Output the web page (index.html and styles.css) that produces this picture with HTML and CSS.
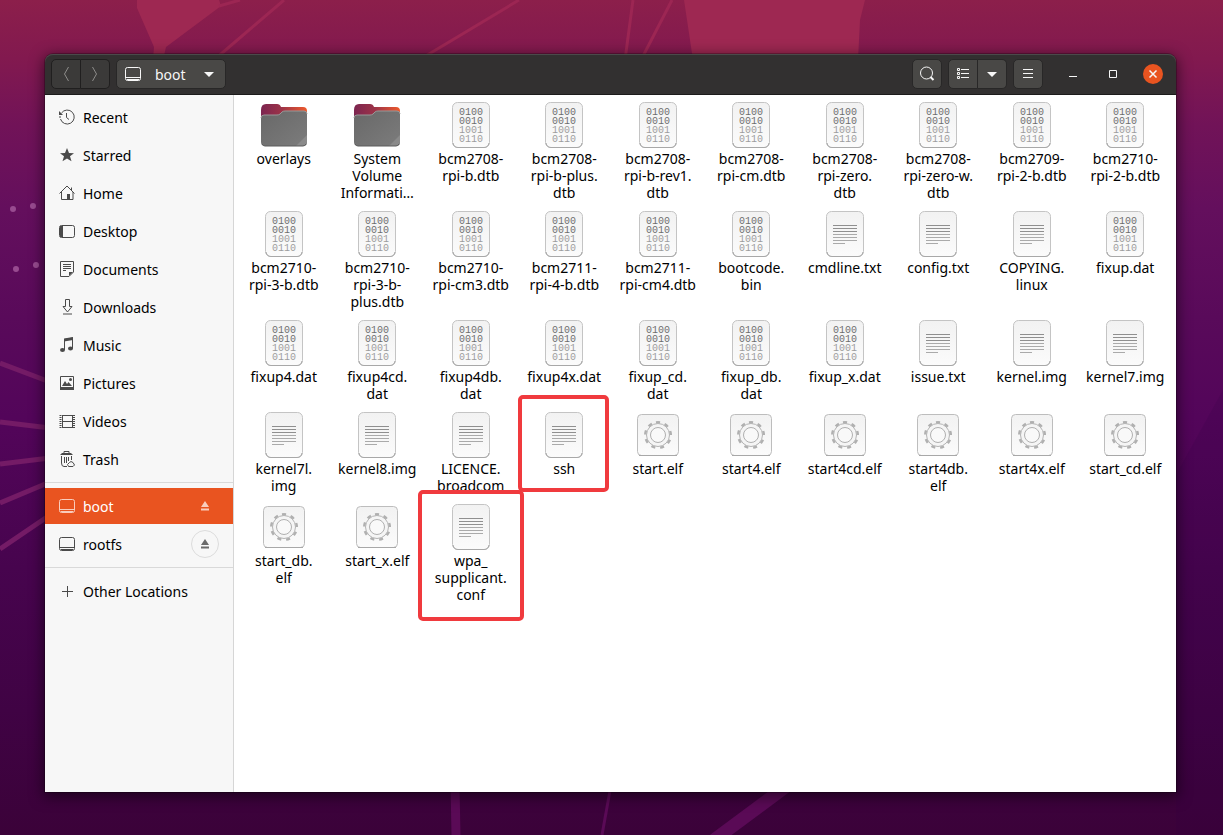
FILE: index.html
```html
<!DOCTYPE html>
<html lang="en">
<head>
<meta charset="utf-8">
<title>boot</title>
<meta name="viewport" content="width=device-width, initial-scale=1">
<link rel="stylesheet" href="styles.css">
</head>
<body>
<svg class="wallpaper" viewBox="0 0 1223 835" preserveAspectRatio="none" aria-hidden="true">
  <g fill="#9e2852">
    <path d="M137 0H219L221 6L166 47L163 60H153L154 47L137 8Z"/>
    <path d="M684 0H865L860 20L858 60H693Z"/>
  </g>
  <g stroke="#9c2653" stroke-width="3" fill="none">
    <path d="M240 0L219 6M284 0L214 60M519 0L419 60M633 0L625 60M672 0L641 60"/>
  </g>
  <g stroke="#741b66" stroke-width="5" fill="none">
    <path d="M0 363L50 382M0 422L50 428M0 464L50 458M0 503L50 482M0 549L50 515"/>
  </g>
  <g fill="#984b90">
    <circle cx="13" cy="209" r="3"/><circle cx="33" cy="206" r="3"/><circle cx="16" cy="269" r="3"/><circle cx="36" cy="265" r="3"/>
  </g>
  <path d="M1223 390L1176 475V835H1223Z" fill="#300040" opacity=".15"/>
  <g stroke="#5a0a56" fill="none">
    <path d="M455 785L456 835" stroke-width="9"/>
    <path d="M611 785L602 835" stroke-width="3"/>
    <path d="M788 785L714 840" stroke-width="13"/>
  </g>
</svg>

<svg class="defs" aria-hidden="true">
  <defs>
    <linearGradient id="paper" x1="0" y1="0" x2="0" y2="1"><stop offset="0" stop-color="#f2f2f2"/><stop offset="1" stop-color="#fbfbfb"/></linearGradient>
    <linearGradient id="flap" x1="0" y1="0" x2="1" y2="0"><stop offset="0" stop-color="#7c2550"/><stop offset=".45" stop-color="#9c3348"/><stop offset="1" stop-color="#ee5a2c"/></linearGradient>
    <linearGradient id="front" x1="0" y1="0" x2="1" y2="1"><stop offset="0" stop-color="#686868"/><stop offset="1" stop-color="#7c7c7c"/></linearGradient>
    <symbol id="folder" viewBox="0 0 48 48">
      <path d="M1 9Q1 3 6 3H17Q20 3 21 6H43Q47 6 47 10V40H1Z" fill="url(#flap)"/>
      <path d="M1 17Q1 14 4 14H17Q19 14 20 13L22 11Q23 10 25 10H44Q47 10 47 13V41Q47 45 43 45H5Q1 45 1 41Z" fill="url(#front)"/>
      <path d="M1 17Q1 14 4 14H17Q19 14 20 13L22 11Q23 10 25 10H44Q47 10 47 13" fill="none" stroke="#989898"/>
      <path d="M36 45L47 34V41Q47 45 43 45Z" fill="#8a8a8a"/>
      <path d="M2 43Q3 45 5 45H43Q45 45 46 43" fill="none" stroke="#5c5c5c"/>
    </symbol>
    <symbol id="sheet" viewBox="0 0 48 48">
      <rect x="5.5" y="1.5" width="37" height="45" rx="5" fill="url(#paper)" stroke="#c4c4c4"/>
      <path d="M6 42Q7 46.500 11 46.500H37Q41 46.500 42 42" fill="none" stroke="#a8a8a8"/>
    </symbol>
    <symbol id="binary" viewBox="0 0 48 48">
      <use href="#sheet"/>
      <g class="bits">
        <text x="12" y="14">0100</text><text x="12" y="23">0010</text><text class="faint" x="12" y="32">1001</text><text class="faint" x="12" y="41">0110</text>
      </g>
    </symbol>
    <symbol id="text" viewBox="0 0 48 48">
      <use href="#sheet"/>
      <path d="M12 15.500H36M12 18.500H36M12 21.500H36" stroke="#8f8f8f"/>
      <path d="M12 24.500H36M12 27.500H36M12 30.500H36M12 33.500H24" stroke="#aaaaaa"/>
    </symbol>
    <symbol id="gear" viewBox="0 0 48 48">
      <rect x="3.500" y="3.500" width="41" height="41" rx="4" fill="url(#paper)" stroke="#bdbdbd"/>
      <path d="M5 44.500H43" stroke="#a8a8a8"/>
      <circle cx="24" cy="24" r="12.500" fill="none" stroke="#b0b0b0" stroke-width="3" stroke-dasharray="4 4.727" transform="rotate(-99 24 24)"/>
      <circle cx="24" cy="24" r="11.500" fill="#f5f5f5" stroke="#b4b4b4"/>
      <circle cx="24" cy="24" r="7.500" fill="#f9f9f9" stroke="#b0b0b0"/>
    </symbol>
    <symbol id="disk" viewBox="0 0 16 16">
      <rect x=".5" y="1.500" width="15" height="13" rx="2" fill="none" stroke="currentColor"/>
      <path d="M1 11.500H15M2 13.500H14" stroke="currentColor"/>
    </symbol>
    <symbol id="eject" viewBox="0 0 16 16"><path d="M8 3L12 9H4ZM4 10.500H12V12.500H4Z" fill="currentColor"/></symbol>
  </defs>
</svg>

<main class="window">
  <header class="titlebar">
    <div class="group">
      <button class="btn nav" aria-label="Back"><svg class="glyph" viewBox="0 0 16 16"><path d="M10.500 1L6.500 8L10.500 15"/></svg></button>
      <button class="btn nav" aria-label="Forward"><svg class="glyph" viewBox="0 0 16 16"><path d="M5.500 1L9.500 8L5.500 15"/></svg></button>
    </div>
    <button class="btn path">
      <svg class="glyph"><use href="#disk"/></svg><span class="path-name">boot</span><svg class="glyph" viewBox="0 0 16 16"><path class="solid" d="M3 6H13L8 11Z"/></svg>
    </button>
    <div class="spacer"></div>
    <button class="btn" aria-label="Search"><svg class="glyph" viewBox="0 0 16 16"><circle cx="7.500" cy="7" r="6"/><path d="M11.500 11L14.500 14" stroke-width="2"/></svg></button>
    <div class="group">
      <button class="btn" aria-label="List view"><svg class="glyph" viewBox="0 0 16 16"><path d="M2.500 2.500H4.500V4.500H2.500ZM2.500 6.500H4.500V8.500H2.500ZM2.500 10.500H4.500V12.500H2.500ZM6 3.500H14M6 7.500H14M6 11.500H14"/></svg></button>
      <button class="btn" aria-label="View options"><svg class="glyph" viewBox="0 0 16 16"><path class="solid" d="M3 6H13L8 11Z"/></svg></button>
    </div>
    <button class="btn" aria-label="Menu"><svg class="glyph" viewBox="0 0 16 16"><path d="M3 3.500H13M3 7.500H13M3 11.500H13"/></svg></button>
    <div class="controls">
      <button class="control" aria-label="Minimize"><svg class="glyph" viewBox="0 0 16 16"><path d="M4 10.500H12"/></svg></button>
      <button class="control" aria-label="Maximize"><svg class="glyph" viewBox="0 0 16 16"><path d="M4.500 4.500H11.500V11.500H4.500Z"/></svg></button>
      <button class="control" aria-label="Close"><svg class="glyph close" viewBox="0 0 20 20"><circle class="disc" cx="10" cy="10" r="10"/><path d="M6.500 6.500L13.500 13.500M13.500 6.500L6.500 13.500" stroke-width="1.500"/></svg></button>
    </div>
  </header>

  <div class="body">
    <nav class="sidebar" aria-label="Places">
      <ul class="places">
        <li class="place"><a href="#"><svg class="glyph" viewBox="0 0 16 16"><path d="M2.500 4A7 7 0 1 1 1.500 10M1 9V7" stroke-dasharray="60"/><path d="M7.500 4V8.500L10 10.500"/><path class="solid" d="M0 2V6H4Z"/></svg>Recent</a></li>
        <li class="place"><a href="#"><svg class="glyph" viewBox="0 0 16 16"><path class="solid" d="M8 1L10 6L15 6.300L11 9.300L12.500 14.300L8 11.500L3.500 14.300L5 9.300L1 6.300L6 6Z"/></svg>Starred</a></li>
        <li class="place"><a href="#"><svg class="glyph" viewBox="0 0 16 16"><path d="M.5 8.500L8 1L15.500 8.500M2.500 7V14.500H14V7M12.500 2.500V5"/><path class="solid" d="M8 9H11V14H8Z"/></svg>Home</a></li>
        <li class="place"><a href="#"><svg class="glyph" viewBox="0 0 16 16"><rect x=".5" y="2.500" width="15" height="12" rx="2"/><path class="solid" d="M1 3H4V14H1Z"/></svg>Desktop</a></li>
        <li class="place"><a href="#"><svg class="glyph" viewBox="0 0 16 16"><path d="M1.500 .5H14.500V11L10 15.500H1.500ZM4 3.500H12M4 5.500H12M4 7.500H12M4 9.500H7"/><path class="solid" d="M10 15V11H14Z"/></svg>Documents</a></li>
        <li class="place"><a href="#"><svg class="glyph" viewBox="0 0 16 16"><path d="M6.500 .5H10.500V7.500H13L8.500 13L4 7.500H6.500ZM4 15H13"/></svg>Downloads</a></li>
        <li class="place"><a href="#"><svg class="glyph" viewBox="0 0 16 16"><path d="M5.500 13V2.500L13.500 1V11.500"/><path class="solid" d="M5 1.500L14 0V3L5 4.500Z"/><ellipse class="solid" cx="3.500" cy="13" rx="2.500" ry="2"/><ellipse class="solid" cx="11.500" cy="11.500" rx="2.500" ry="2"/></svg>Music</a></li>
        <li class="place"><a href="#"><svg class="glyph" viewBox="0 0 16 16"><path d="M1.500 1.500H14.500V14.500H1.500Z"/><path class="solid" d="M1 12H15V15H1ZM3 11L6 6L8 9L9.500 7L13 11Z"/><circle class="solid" cx="11.500" cy="4.500" r="1.500"/></svg>Pictures</a></li>
        <li class="place"><a href="#"><svg class="glyph" viewBox="0 0 16 16"><path d="M3.500 2V15M13.500 2V15M3 2.500H14M3 8.500H14M3 14.500H14"/><path d="M1.500 2V15M15 2V15" stroke-width="2" stroke-dasharray="1 1"/></svg>Videos</a></li>
        <li class="place"><a href="#"><svg class="glyph" viewBox="0 0 16 16"><path d="M2.500 5V12Q2.500 15.500 5 15.500H8M12.500 5V9M5.500 6V12M7.500 6V12M9.500 6V10M5 2V.5H10V2"/><path class="solid" d="M1 4L3 2H12L14 4Z"/><path d="M9.500 15.500L8.500 13.500L10.500 11.500L12 10.500L14 11.500L15.500 14L14 15.500Z"/></svg>Trash</a></li>
      </ul>
      <ul class="places">
        <li class="place selected"><a href="#"><svg class="glyph"><use href="#disk"/></svg>boot</a><button class="eject" aria-label="Eject boot"><svg class="glyph"><use href="#eject"/></svg></button></li>
        <li class="place"><a href="#"><svg class="glyph"><use href="#disk"/></svg>rootfs</a><button class="eject ring" aria-label="Eject rootfs"><svg class="glyph"><use href="#eject"/></svg></button></li>
      </ul>
      <ul class="places">
        <li class="place"><a href="#"><svg class="glyph" viewBox="0 0 16 16"><path d="M3 8.500H14M8.500 3V14"/></svg>Other Locations</a></li>
      </ul>
    </nav>

    <section class="content" aria-label="Files">
      <ul class="files">
        <li class="file"><svg class="icon"><use href="#folder"/></svg>overlays</li>
        <li class="file"><svg class="icon"><use href="#folder"/></svg>System<br>Volume<br>Informati…</li>
        <li class="file"><svg class="icon"><use href="#binary"/></svg>bcm2708-<br>rpi-b.dtb</li>
        <li class="file"><svg class="icon"><use href="#binary"/></svg>bcm2708-<br>rpi-b-plus.<br>dtb</li>
        <li class="file"><svg class="icon"><use href="#binary"/></svg>bcm2708-<br>rpi-b-rev1.<br>dtb</li>
        <li class="file"><svg class="icon"><use href="#binary"/></svg>bcm2708-<br>rpi-cm.dtb</li>
        <li class="file"><svg class="icon"><use href="#binary"/></svg>bcm2708-<br>rpi-zero.<br>dtb</li>
        <li class="file"><svg class="icon"><use href="#binary"/></svg>bcm2708-<br>rpi-zero-w.<br>dtb</li>
        <li class="file"><svg class="icon"><use href="#binary"/></svg>bcm2709-<br>rpi-2-b.dtb</li>
        <li class="file"><svg class="icon"><use href="#binary"/></svg>bcm2710-<br>rpi-2-b.dtb</li>

        <li class="file"><svg class="icon"><use href="#binary"/></svg>bcm2710-<br>rpi-3-b.dtb</li>
        <li class="file"><svg class="icon"><use href="#binary"/></svg>bcm2710-<br>rpi-3-b-<br>plus.dtb</li>
        <li class="file"><svg class="icon"><use href="#binary"/></svg>bcm2710-<br>rpi-cm3.dtb</li>
        <li class="file"><svg class="icon"><use href="#binary"/></svg>bcm2711-<br>rpi-4-b.dtb</li>
        <li class="file"><svg class="icon"><use href="#binary"/></svg>bcm2711-<br>rpi-cm4.dtb</li>
        <li class="file"><svg class="icon"><use href="#binary"/></svg>bootcode.<br>bin</li>
        <li class="file"><svg class="icon"><use href="#text"/></svg>cmdline.txt</li>
        <li class="file"><svg class="icon"><use href="#text"/></svg>config.txt</li>
        <li class="file"><svg class="icon"><use href="#text"/></svg>COPYING.<br>linux</li>
        <li class="file"><svg class="icon"><use href="#binary"/></svg>fixup.dat</li>

        <li class="file"><svg class="icon"><use href="#binary"/></svg>fixup4.dat</li>
        <li class="file"><svg class="icon"><use href="#binary"/></svg>fixup4cd.<br>dat</li>
        <li class="file"><svg class="icon"><use href="#binary"/></svg>fixup4db.<br>dat</li>
        <li class="file"><svg class="icon"><use href="#binary"/></svg>fixup4x.dat</li>
        <li class="file"><svg class="icon"><use href="#binary"/></svg>fixup_cd.<br>dat</li>
        <li class="file"><svg class="icon"><use href="#binary"/></svg>fixup_db.<br>dat</li>
        <li class="file"><svg class="icon"><use href="#binary"/></svg>fixup_x.dat</li>
        <li class="file"><svg class="icon"><use href="#text"/></svg>issue.txt</li>
        <li class="file"><svg class="icon"><use href="#text"/></svg>kernel.img</li>
        <li class="file"><svg class="icon"><use href="#text"/></svg>kernel7.img</li>

        <li class="file"><svg class="icon"><use href="#text"/></svg>kernel7l.<br>img</li>
        <li class="file"><svg class="icon"><use href="#text"/></svg>kernel8.img</li>
        <li class="file"><svg class="icon"><use href="#text"/></svg>LICENCE.<br>broadcom</li>
        <li class="file marked mark-ssh"><svg class="icon"><use href="#text"/></svg>ssh</li>
        <li class="file"><svg class="icon"><use href="#gear"/></svg>start.elf</li>
        <li class="file"><svg class="icon"><use href="#gear"/></svg>start4.elf</li>
        <li class="file"><svg class="icon"><use href="#gear"/></svg>start4cd.elf</li>
        <li class="file"><svg class="icon"><use href="#gear"/></svg>start4db.<br>elf</li>
        <li class="file"><svg class="icon"><use href="#gear"/></svg>start4x.elf</li>
        <li class="file"><svg class="icon"><use href="#gear"/></svg>start_cd.elf</li>

        <li class="file"><svg class="icon"><use href="#gear"/></svg>start_db.<br>elf</li>
        <li class="file"><svg class="icon"><use href="#gear"/></svg>start_x.elf</li>
        <li class="file marked mark-wpa"><svg class="icon"><use href="#text"/></svg>wpa_<br>supplicant.<br>conf</li>
      </ul>
    </section>
  </div>
</main>
</body>
</html>
```

FILE: styles.css
```css
*, *::after { box-sizing: border-box; }

body {
  margin: 0;
  min-height: 100vh;
  display: flex;
  padding: 54px 47px 43px 45px;
  font-family: "Noto Sans", "Open Sans", sans-serif;
  font-size: 14px;
  line-height: 17px;
  color: #000;
  background: linear-gradient(#8c1f4b 0%, #82194f 7%, #711358 15%, #640f5d 25%, #590a5a 38%, #53055a 50%, #47044e 68%, #400344 85%, #3b0239 100%);
}

ul { list-style: none; margin: 0; padding: 0; }

button {
  margin: 0;
  padding: 0;
  border: 0;
  background: none;
  font: inherit;
  color: inherit;
}

.wallpaper {
  position: fixed;
  inset: 0;
  width: 100%;
  height: 100%;
}

.defs { position: absolute; width: 0; height: 0; }

.glyph {
  display: block;
  flex: none;
  width: 16px;
  height: 16px;
  fill: none;
  stroke: currentColor;
}
.glyph .solid { fill: currentColor; stroke: none; }
.glyph.close { width: 20px; height: 20px; }
.glyph .disc { fill: #e95420; stroke: none; }
.glyph use { stroke: none; }

.window {
  position: relative;
  flex: 1;
  display: flex;
  flex-direction: column;
  border-radius: 8px 8px 0 0;
  box-shadow: 0 0 0 1px rgba(0, 0, 0, .25), 0 3px 14px 2px rgba(0, 0, 0, .5);
}

.titlebar {
  display: flex;
  align-items: center;
  gap: 6px;
  height: 41px;
  padding: 0 3px 0 6px;
  color: #f7f7f7;
  background: #323030;
  box-shadow: inset 0 1px #4a4a4a;
  border-bottom: 1px solid #1c1b1b;
  border-radius: 8px 8px 0 0;
}

.group { display: flex; }

.btn {
  display: flex;
  align-items: center;
  justify-content: center;
  width: 30px;
  height: 30px;
  background: #494846;
  border: 1px solid #282727;
  border-radius: 5px;
}
.btn.nav { color: #8e8d8b; background: #3b3a39; border-color: #201f1f; }
.group .btn:first-child { border-radius: 5px 0 0 5px; }
.group .btn:last-child { width: 29px; border-left: 0; border-radius: 0 5px 5px 0; }

.path {
  width: auto;
  padding: 0 8px;
}
.path-name { padding: 0 15px 0 14px; }

.spacer { flex: 1; }

.controls { display: flex; margin-left: 4px; }
.control {
  display: flex;
  align-items: center;
  justify-content: center;
  width: 40px;
  height: 30px;
}

.body { flex: 1; display: flex; }

.sidebar {
  flex: none;
  width: 189px;
  background: #f7f7f7;
  border-right: 1px solid #d6d6d6;
}
.places {
  display: flex;
  flex-direction: column;
  gap: 2px;
  padding: 5px 0;
}
.places:first-child { padding-top: 4px; }
.places + .places { border-top: 1px solid #d9d9d9; }

.place {
  display: flex;
  align-items: center;
  height: 36px;
  padding: 0 14px;
}
.place a {
  flex: 1;
  display: flex;
  align-items: center;
  gap: 8px;
  color: #000;
  text-decoration: none;
}
.place a .glyph { color: #4a4a4a; }
.place.selected { background: #e95420; }
.place.selected a { color: #fff; }
.place.selected a .glyph, .selected .eject { color: #f9ccbc; }

.eject {
  display: flex;
  align-items: center;
  justify-content: center;
  width: 28px;
  height: 28px;
  border-radius: 50%;
  color: #6a6a6a;
}
.eject.ring { border: 1px solid #dcdcdc; }

.content { flex: 1; background: #fff; }

.files {
  display: grid;
  grid-template-columns: repeat(10, minmax(0, 1fr));
  padding: 6px 4px 6px 3px;
}
.file {
  position: relative;
  padding-bottom: 9px;
  text-align: center;
  white-space: nowrap;
}
.icon {
  display: block;
  width: 48px;
  height: 48px;
  margin: 0 auto 1px;
}
.bits {
  font-family: "Liberation Mono", monospace;
  font-size: 10px;
  fill: #333;
  opacity: .7;
}
.bits .faint { fill: #777; }

.marked::after {
  content: "";
  position: absolute;
  border: 4px solid #f03a3e;
  border-radius: 5px;
}
.mark-ssh::after { top: -16px; left: 0; right: 2px; height: 97px; }
.mark-wpa::after { top: -13px; left: -6px; right: -6px; height: 131px; }
```
